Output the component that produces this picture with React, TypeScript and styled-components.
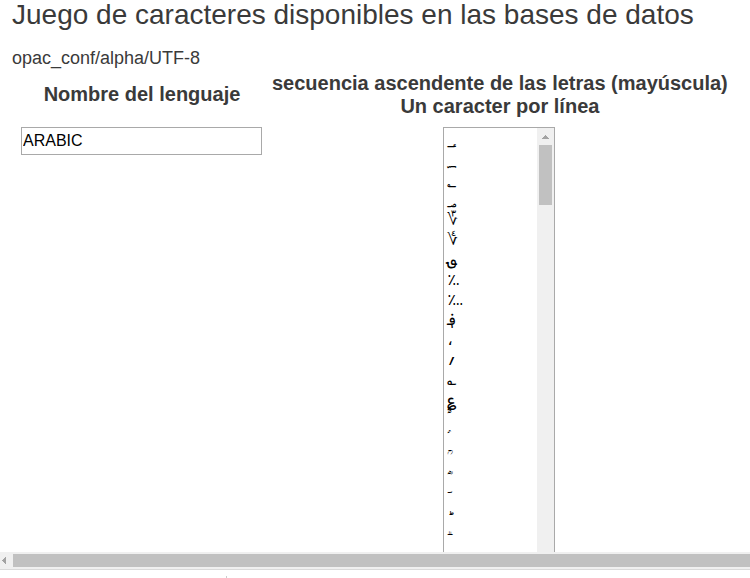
import React from "react";
import styled, { createGlobalStyle } from "styled-components";

const GlobalStyle = createGlobalStyle`
  * { box-sizing: border-box; }
  body {
    margin: 0;
    background: #fff;
    color: #3a3a3a;
    font-family: "Liberation Sans", Arial, sans-serif;
  }
`;

const Page = styled.div`
  display: flex;
  flex-direction: column;
  height: 100vh;
  overflow: hidden;
`;

const Content = styled.main`
  flex: 1;
  min-height: 0;
  overflow: hidden;
  padding: 0 12px;
`;

const Title = styled.h1`
  margin: 0;
  font-size: 28px;
  line-height: 30px;
  font-weight: 400;
  white-space: nowrap;
`;

const FilePath = styled.p`
  margin: 18px 0 0;
  font-size: 18px;
  line-height: 20px;
`;

const LanguageTable = styled.table`
  border-collapse: collapse;
`;

const HeaderCell = styled.th`
  height: 53px;
  padding: 0;
  font-size: 20px;
  line-height: 23px;
  white-space: nowrap;
  vertical-align: middle;
`;

const Cell = styled.td`
  padding: 6px 10px 0 9px;
  vertical-align: top;
`;

const NameInput = styled.input`
  display: block;
  width: 241px;
  height: 28px;
  padding: 1px;
  border: 1px solid #a9a9a9;
  border-radius: 0;
  background: #fff;
  color: #000;
  font: 16px "Liberation Sans", Arial, sans-serif;
`;

const LettersBox = styled.div`
  display: flex;
  width: 112px;
  height: 600px;
  margin: 0 auto;
  border: 1px solid #a9a9a9;
`;

const Letters = styled.textarea`
  flex: 1;
  min-width: 0;
  padding: 2px 3px;
  border: 0;
  outline: 0;
  resize: none;
  background: #fff;
  color: #000;
  font: 16px/20px "Liberation Sans", "DejaVu Sans", sans-serif;
  scrollbar-width: none;
`;

const VerticalTrack = styled.div`
  display: flex;
  flex-direction: column;
  align-items: center;
  width: 17px;
  background: #f0f0f0;
`;

const VerticalThumb = styled.div`
  width: 13px;
  height: 60px;
  background: #c1c1c1;
`;

const HorizontalTrack = styled.div`
  display: flex;
  align-items: center;
  height: 18px;
  border-bottom: 1px solid #dadada;
  background: #f0f0f0;
`;

const HorizontalThumb = styled.div`
  flex: 1;
  height: 13px;
  background: #c1c1c1;
`;

const Arrow = styled.svg`
  display: block;
  flex: none;
  fill: #a3a3a3;
`;

const StatusBar = styled.footer`
  display: flex;
  align-items: flex-end;
  height: 8px;
  padding-left: 226px;
`;

const StatusDivider = styled.div`
  width: 1px;
  height: 2px;
  background: #ccc;
`;

const letterCodes = [
  0x600, 0x601, 0x602, 0x603, 0x606, 0x607, 0x608, 0x609, 0x60a, 0x60b, 0x60c,
  0x60d, 0x60e, 0x60f, 0x610, 0x611, 0x612, 0x613, 0x614, 0x615, 0x616,
];

const letters = letterCodes.map((code) => String.fromCharCode(code)).join("\n");

export default function App() {
  return (
    <Page>
      <GlobalStyle />
      <Content>
        <Title>Juego de caracteres disponibles en las bases de datos</Title>
        <FilePath>opac_conf/alpha/UTF-8</FilePath>
        <LanguageTable>
          <thead>
            <tr>
              <HeaderCell id="language-name" scope="col">Nombre del lenguaje</HeaderCell>
              <HeaderCell id="letter-sequence" scope="col">
                secuencia ascendente de las letras (mayúscula)
                <br />
                Un caracter por línea
              </HeaderCell>
            </tr>
          </thead>
          <tbody>
            <tr>
              <Cell>
                <NameInput type="text" defaultValue="ARABIC" aria-labelledby="language-name" />
              </Cell>
              <Cell>
                <LettersBox>
                  <Letters
                    defaultValue={letters}
                    aria-labelledby="letter-sequence"
                    spellCheck={false}
                  />
                  <VerticalTrack aria-hidden="true">
                    <Arrow width="17" height="17" viewBox="0 0 17 17">
                      <path d="M5 11h7v-1h-1v-1h-1v-1h-1v-1h-1v1h-1v1h-1v1h-1z" />
                    </Arrow>
                    <VerticalThumb />
                  </VerticalTrack>
                </LettersBox>
              </Cell>
            </tr>
          </tbody>
        </LanguageTable>
      </Content>
      <HorizontalTrack aria-hidden="true">
        <Arrow width="13" height="17" viewBox="0 0 13 17">
          <path d="M6 5v7h-1v-1h-1v-1h-1v-1h-1v-1h1v-1h1v-1h1v-1z" />
        </Arrow>
        <HorizontalThumb />
      </HorizontalTrack>
      <StatusBar>
        <StatusDivider />
      </StatusBar>
    </Page>
  );
}
